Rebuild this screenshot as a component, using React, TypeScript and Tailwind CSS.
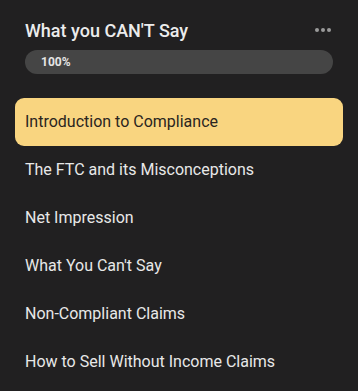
const lessons = [
  "Introduction to Compliance",
  "The FTC and its Misconceptions",
  "Net Impression",
  "What You Can't Say",
  "Non-Compliant Claims",
  "How to Sell Without Income Claims",
];

const App = () => {
  const active = 0;

  return (
    <div className="min-h-screen w-full bg-[#212021] font-['Roboto',sans-serif] pt-[20px]">
      {/* Header */}
      <div className="flex items-center justify-between pl-[25px] pr-[27px]">
        <h1 className="text-[18px] leading-[22px] font-medium text-[#ececec]">What you CAN'T Say</h1>
        <div className="flex gap-[2px] pb-[2px]">
          <span className="h-[4px] w-[4px] rounded-full bg-[#9a9a9a]" />
          <span className="h-[4px] w-[4px] rounded-full bg-[#9a9a9a]" />
          <span className="h-[4px] w-[4px] rounded-full bg-[#9a9a9a]" />
        </div>
      </div>

      {/* Progress */}
      <div className="mx-[25px] mt-[8px] h-[24px] rounded-full bg-[#454545] flex items-center pl-[16px]">
        <span className="text-[12px] font-bold text-[#e4e4e4]">100%</span>
      </div>

      {/* Lessons */}
      <ul className="mt-[24px] px-[15px]">
        {lessons.map((title, i) => (
          <li
            key={title}
            className={
              i === active
                ? "h-[48px] flex items-center px-[10px] rounded-[9px] bg-[#f9d580] text-[#2a2520] text-[16px]"
                : "h-[48px] flex items-center px-[10px] text-[#e8e8e8] text-[16px]"
            }
          >
            {title}
          </li>
        ))}
      </ul>
    </div>
  );
};

export default App;
